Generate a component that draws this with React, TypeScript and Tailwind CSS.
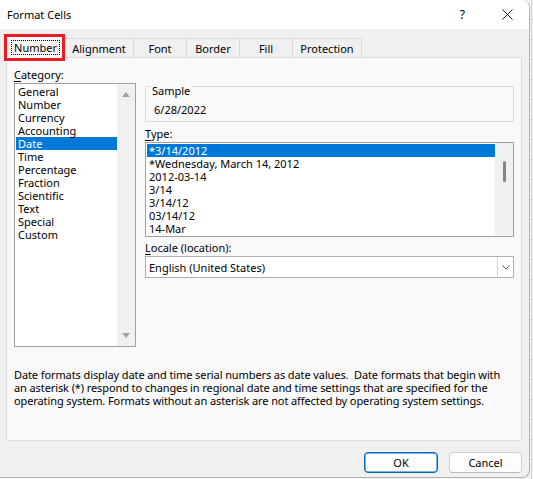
import React from "react";

const categories = [
  "General",
  "Number",
  "Currency",
  "Accounting",
  "Date",
  "Time",
  "Percentage",
  "Fraction",
  "Scientific",
  "Text",
  "Special",
  "Custom",
];

const types = [
  "*3/14/2012",
  "*Wednesday, March 14, 2012",
  "2012-03-14",
  "3/14",
  "3/14/12",
  "03/14/12",
  "14-Mar",
];

const tabs = [
  { label: "Alignment", w: "w-[70px]" },
  { label: "Font", w: "w-[54px]" },
  { label: "Border", w: "w-[54px]" },
  { label: "Fill", w: "w-[54px]" },
  { label: "Protection", w: "w-[70px]" },
];

export default function App() {
  return (
    <div className="flex w-[533px] h-[479px] overflow-hidden bg-[repeating-linear-gradient(to_bottom,#f1f1f1_0px,#f1f1f1_19px,#d6d6d6_19px,#d6d6d6_20px)] font-['Noto_Sans',sans-serif] text-[11px] leading-[13px] text-black">
      <div className="relative flex flex-col w-[530px] h-[478px] shrink-0 bg-[#f0f0f0] border-r border-b border-[#b3b3b3] rounded-r-[8px] overflow-hidden">
        {/* Title bar */}
        <div className="flex items-center h-[29px] shrink-0 bg-white">
          <span className="pl-[7px]">Format Cells</span>
          <span className="ml-auto mr-[37px] text-[12px]">?</span>
          <svg width="11" height="11" viewBox="0 0 11 11" className="mr-[16px]">
            <path d="M0.5 0.5 L10.5 10.5 M10.5 0.5 L0.5 10.5" stroke="#1a1a1a" strokeWidth="1" fill="none" />
          </svg>
        </div>

        {/* Tabs */}
        <div className="flex items-end h-[28px] pl-[6px] shrink-0">
          <div className="relative z-10 -mb-px flex items-center justify-center w-[59px] h-[22px] bg-[#f9f9f9] border border-b-0 border-[#d9d9d9]">
            <span className="px-[2px] leading-[13px] border border-dotted border-black">Number</span>
          </div>
          {tabs.map((t) => (
            <div
              key={t.label}
              className={`flex items-center justify-center h-[19px] -ml-px border border-b-0 border-[#d9d9d9] bg-[#f0f0f0] ${t.w}`}
            >
              {t.label}
            </div>
          ))}
        </div>

        {/* Red annotation box */}
        <div className="absolute left-[4px] top-[34px] w-[61px] h-[27px] border-[3px] border-[#ec1c24] z-20" />

        {/* Panel */}
        <div className="ml-[6px] w-[516px] h-[384px] shrink-0 flex flex-col border border-[#dcdcdc] bg-[#f9f9f9]">
          <div className="flex pt-[10px] pl-[7px]">
            {/* Category */}
            <div className="w-[122px]">
              <div>
                <span className="underline underline-offset-2">C</span>ategory:
              </div>
              <div className="mt-[2px] flex h-[264px] border border-[#a0a0a0] bg-white">
                <div className="flex-1 pl-px pt-px">
                  {categories.map((c) => (
                    <div
                      key={c}
                      className={
                        c === "Date"
                          ? "h-[13px] pl-[2px] bg-[#0078d7] text-white"
                          : "h-[13px] pl-[2px]"
                      }
                    >
                      {c}
                    </div>
                  ))}
                </div>
                <div className="flex w-[18px] flex-col items-center justify-between py-[8px] bg-[#f0f0f0]">
                  <svg width="8" height="5" viewBox="0 0 8 5">
                    <path d="M0 5 L4 0 L8 5 Z" fill="#a3a3a3" />
                  </svg>
                  <svg width="8" height="5" viewBox="0 0 8 5">
                    <path d="M0 0 L8 0 L4 5 Z" fill="#a3a3a3" />
                  </svg>
                </div>
              </div>
            </div>

            {/* Right column */}
            <div className="ml-[9px] w-[369px]">
              <div className="relative mt-[18px] h-[36px] border border-[#dcdcdc] pl-[8px] pt-[16px]">
                <span className="absolute left-[5px] top-[-3px] px-px bg-[#f9f9f9]">Sample</span>
                6/28/2022
              </div>
              <div className="mt-[5px]">
                <span className="underline underline-offset-2">T</span>ype:
              </div>
              <div className="mt-[2px] flex h-[95px] border border-[#a0a0a0] bg-white">
                <div className="flex-1 pl-px pt-px">
                  {types.map((t, i) => (
                    <div
                      key={t}
                      className={
                        i === 0
                          ? "h-[13px] pl-[2px] bg-[#0078d7] text-white"
                          : "h-[13px] pl-[2px]"
                      }
                    >
                      {t}
                    </div>
                  ))}
                </div>
                <div className="flex w-[18px] flex-col items-center pt-[18px] bg-[#f0f0f0]">
                  <div className="w-[3px] h-[21px] rounded-full bg-[#858585]" />
                </div>
              </div>
              <div className="mt-[4px]">
                <span className="underline underline-offset-2">L</span>ocale (location):
              </div>
              <div className="mt-[2px] flex h-[22px] items-stretch border border-[#b0b0b0] bg-white">
                <div className="flex flex-1 items-center pl-[3px]">English (United States)</div>
                <div className="flex w-[16px] items-center justify-center border-l border-[#d4d4d4]">
                  <svg width="8" height="5" viewBox="0 0 8 5">
                    <path d="M0.5 0.5 L4 4 L7.5 0.5" stroke="#606060" strokeWidth="1" fill="none" />
                  </svg>
                </div>
              </div>
            </div>
          </div>

          <p className="mt-[21px] pl-[7px] whitespace-nowrap tracking-[-0.1px]">
            Date formats display date and time serial numbers as date values.&nbsp; Date formats that begin with
            <br />
            an asterisk (*) respond to changes in regional date and time settings that are specified for the
            <br />
            operating system. Formats without an asterisk are not affected by operating system settings.
          </p>
        </div>

        {/* Buttons */}
        <div className="mt-[11px] flex justify-end gap-[11px] pr-[7px]">
          <button className="flex h-[21px] w-[74px] items-center justify-center rounded-[4px] border border-[#0067c0] bg-[#fdfdfd] shadow-[inset_0_0_0_0.5px_#0067c0]">
            OK
          </button>
          <button className="flex h-[21px] w-[73px] items-center justify-center rounded-[4px] border border-[#d0d0d0] border-b-[#b8b8b8] bg-[#fdfdfd]">
            Cancel
          </button>
        </div>
      </div>
      <div className="flex-1 border-l border-[#d6d6d6] ml-[1px]" />
    </div>
  );
}
